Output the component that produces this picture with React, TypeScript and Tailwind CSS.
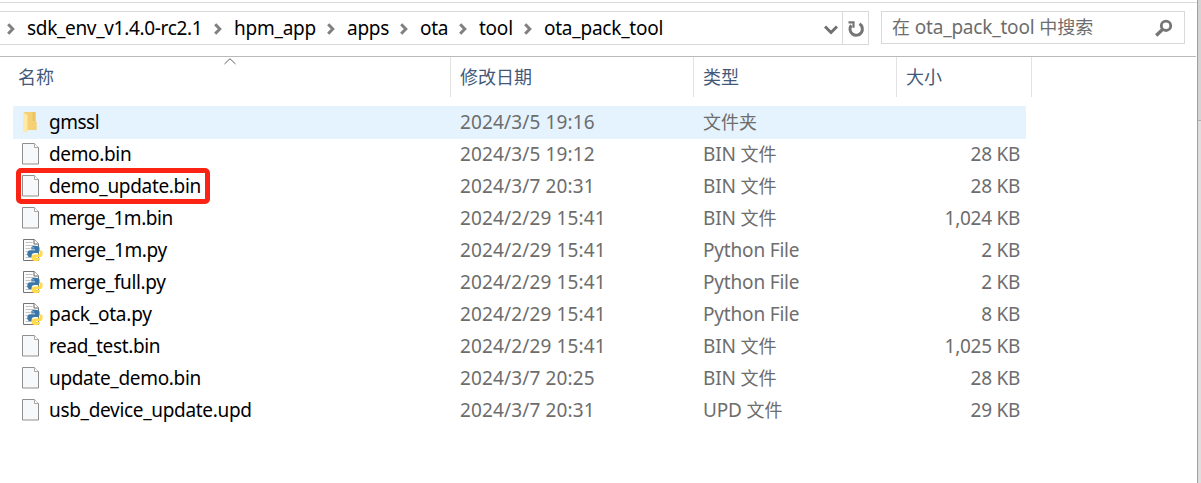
import React from "react";

const files = [
  { icon: "folder", name: "gmssl", nameCls: "tracking-[-0.5px]", date: "2024/3/5 19:16", type: "", cjk: "文件夹", size: "" },
  { icon: "file", name: "demo.bin", nameCls: "tracking-[-0.35px]", date: "2024/3/5 19:12", type: "BIN", cjk: "文件", size: "28 KB" },
  { icon: "file", name: "demo_update.bin", nameCls: "tracking-[-0.33px]", date: "2024/3/7 20:31", type: "BIN", cjk: "文件", size: "28 KB" },
  { icon: "file", name: "merge_1m.bin", nameCls: "tracking-[-0.43px]", date: "2024/2/29 15:41", type: "BIN", cjk: "文件", size: "1,024 KB" },
  { icon: "python", name: "merge_1m.py", nameCls: "tracking-[-0.35px]", date: "2024/2/29 15:41", type: "Python File", cjk: "", size: "2 KB" },
  { icon: "python", name: "merge_full.py", nameCls: "tracking-[-0.35px]", date: "2024/2/29 15:41", type: "Python File", cjk: "", size: "2 KB" },
  { icon: "python", name: "pack_ota.py", nameCls: "tracking-[-0.22px]", date: "2024/2/29 15:41", type: "Python File", cjk: "", size: "8 KB" },
  { icon: "file", name: "read_test.bin", nameCls: "tracking-[-0.37px]", date: "2024/2/29 15:41", type: "BIN", cjk: "文件", size: "1,025 KB" },
  { icon: "file", name: "update_demo.bin", nameCls: "tracking-[-0.33px]", date: "2024/3/7 20:25", type: "BIN", cjk: "文件", size: "28 KB" },
  { icon: "file", name: "usb_device_update.upd", nameCls: "tracking-[-0.32px]", date: "2024/3/7 20:31", type: "UPD", cjk: "文件", size: "29 KB" },
];

const crumbs = [
  { name: "sdk_env_v1.4.0-rc2.1", cls: "w-[207px]" },
  { name: "hpm_app", cls: "w-[113px]" },
  { name: "apps", cls: "w-[73px]" },
  { name: "ota", cls: "w-[59px]" },
  { name: "tool", cls: "w-[65px]" },
  { name: "ota_pack_tool", cls: "w-[140px]" },
];

function Chevron() {
  return (
    <svg width="8" height="12" viewBox="0 0 8 12" className="mt-px shrink-0" fill="none" stroke="#808080" strokeWidth="3">
      <path d="M1.2 1.2 5.8 6 1.2 10.8" />
    </svg>
  );
}

function FolderIcon() {
  return (
    <svg width="21" height="24" viewBox="0 0 21 24">
      <path d="M2 2h11.500v9l1.200 1.200V20H4z" fill="#f5d075" />
      <path d="M10.500 2h3v9h-3z" fill="#edc560" />
      <path d="M1 2.500 5.500 5v18L1 21z" fill="#ffe9a6" />
    </svg>
  );
}

function FileIcon() {
  return (
    <svg width="21" height="24" viewBox="0 0 21 24">
      <path d="M.5 1.500h12l4 4v16.500H.5z" fill="#f7f8f9" stroke="#8f8f8f" />
      <path d="M12.500 1.500v4h4" fill="#fff" stroke="#a8a8a8" />
    </svg>
  );
}

function PythonIcon() {
  return (
    <svg width="21" height="24" viewBox="0 0 21 24">
      <path d="M1.500 1.500h10.700l4.300 4.300v16.700h-15z" fill="#fbfbfb" stroke="#757575" />
      <path d="M12 1.500v4.500h4.500" fill="#fff" stroke="#666" />
      <path d="M3.500 4.500h7M3.500 7.500h9M3.500 10.500h5M3.500 13.500h3M3.500 16.500h3M3.500 19.500h6" stroke="#c4c4c4" />
      <path d="M12.800 7.800c-3 0-3.500 1-3.500 2.200v1.500h3.800v.7H8.200c-2 0-2.900 1.500-2.900 3.600s1 3.500 2.700 3.500h1.700v-1.800c0-1.600 1.100-2.600 2.600-2.600h3c1.400 0 2.200-.9 2.200-2.100V10c0-1.400-1.800-2.200-4.700-2.200z" fill="#3b76a8" />
      <path d="M18 12.200v1.700c0 1.600-1.100 2.600-2.600 2.600h-2.800c-1.500 0-2.900.9-2.900 2.100v2.200c0 1.600 2 2.400 4.300 2.400 2.500 0 4-.8 4-2.100v-1.300h-3.800v-.7h3.900c1.800 0 2.600-1.500 2.600-3.500 0-2.200-.7-3.400-2.700-3.400z" fill="#ffdb4d" />
      <circle cx="11.100" cy="9.800" r=".6" fill="#e4edf4" />
    </svg>
  );
}

function Heading({ children, className }: { children: React.ReactNode; className: string }) {
  return <div className={`h-10 shrink-0 border-r border-[#e2e2e2] pt-[7px] text-lg leading-[26px] text-[#44597a] ${className}`}>{children}</div>;
}

export default function App() {
  return (
    <div className="flex h-[483px] w-[1201px] overflow-hidden bg-white font-['Noto_Sans','Noto_Sans_CJK_SC',sans-serif] text-[19px]">
      <div className="flex w-[1197px] flex-col">
        <div className="mt-[2px] h-px bg-[#dcdcdc]" />
        <div className="mt-2 flex">
          <div className="flex h-[34px] w-[869px] border border-l-0 border-[#d9d9d9]">
            <nav className="flex w-[842px] items-center pl-[7px]">
              {crumbs.map((c, i) => (
                <div key={c.name} className={`flex items-center ${c.cls}`}>
                  <Chevron />
                  <span className={`mb-px ml-3 leading-8 text-black ${i === 0 ? "tracking-[-0.33px]" : "tracking-[-0.24px]"}`}>{c.name}</span>
                </div>
              ))}
              <svg width="14" height="10" viewBox="0 0 14 10" className="ml-auto mr-[4px] mt-[3px]" fill="none" stroke="#6f6f6f" strokeWidth="3">
                <path d="M1 1.500 7 7.500 13 1.500" />
              </svg>
            </nav>
            <div className="flex flex-1 items-center justify-center border-l border-[#d9d9d9]">
              <svg width="18" height="18" viewBox="0 0 18 18" className="mt-px" fill="none" stroke="#757575" strokeWidth="3">
                <path d="M4.300 5.200A6.200 6.200 0 1 0 12.500 3.800" />
                <path d="M1.500 2.300h5v5.500" strokeWidth="2.200" />
              </svg>
            </div>
          </div>
          <div className="ml-3 flex h-[33px] w-[304px] items-center justify-between border border-[#d9d9d9] pl-[10px] pr-3 text-[#6d6d6d]">
            <span className="mb-px leading-8 tracking-[-0.2px]">
              <span className="text-lg tracking-normal">在</span> ota_pack_tool <span className="text-lg tracking-normal">中搜索</span>
            </span>
            <svg width="17" height="18" viewBox="0 0 17 18" fill="none" stroke="#757575">
              <circle cx="11" cy="6.800" r="4.700" strokeWidth="2.800" />
              <path d="M7.500 10.500 1.200 16.500" strokeWidth="3.300" />
            </svg>
          </div>
        </div>
        <div className="mt-[11px] h-px w-[1196px] bg-[#b9b9b9]" />
        <div className="flex">
          <Heading className="relative w-[451px] pl-[18px]">
            名称
            <svg width="12" height="7" viewBox="0 0 12 7" className="absolute left-[224px] top-px" fill="none" stroke="#606060">
              <path d="M.5 6 6 .7 11.500 6" />
            </svg>
          </Heading>
          <Heading className="w-[243px] pl-[9px]">修改日期</Heading>
          <Heading className="w-[203px] pl-[9px]">类型</Heading>
          <Heading className="w-[135px] pl-[9px]">大小</Heading>
        </div>
        <div className="ml-[13px] mt-[9px] flex w-[1013px] flex-col">
          {files.map((f, i) => (
            <div key={f.name} className={`flex items-center leading-8 text-[#6d6d6d] ${i === 0 ? "-mb-px h-[33px] bg-[#e5f3ff] pb-px" : "h-8"}`}>
              <div className="relative flex h-full w-[447px] items-center pl-[9px] text-black">
                {f.icon === "folder" ? <FolderIcon /> : f.icon === "python" ? <PythonIcon /> : <FileIcon />}
                <span className={`ml-1.5 ${f.nameCls}`}>{f.name}</span>
                {i === 2 && <div className="absolute -top-[2px] left-[3px] h-[36px] w-[194px] rounded-[5px] border-[5px] border-[#fb2314]" />}
              </div>
              <span className="w-[243px] tracking-[0.14px]">{f.date}</span>
              <span className="w-[203px] tracking-[-0.18px]">
                {f.type ? `${f.type} ` : ""}<span className="text-lg tracking-normal">{f.cjk}</span>
              </span>
              <span className="flex-1 pr-[6px] text-right tracking-[-0.28px]">{f.size}</span>
            </div>
          ))}
        </div>
      </div>
      <div className="flex w-1 flex-col border-l border-[#a0a0a0] bg-[#d4d4d4]">
        <div className="mt-[120px] h-px bg-[#b0b0b0]" />
        <div className="flex-1 bg-[#dedede]" />
      </div>
    </div>
  );
}
